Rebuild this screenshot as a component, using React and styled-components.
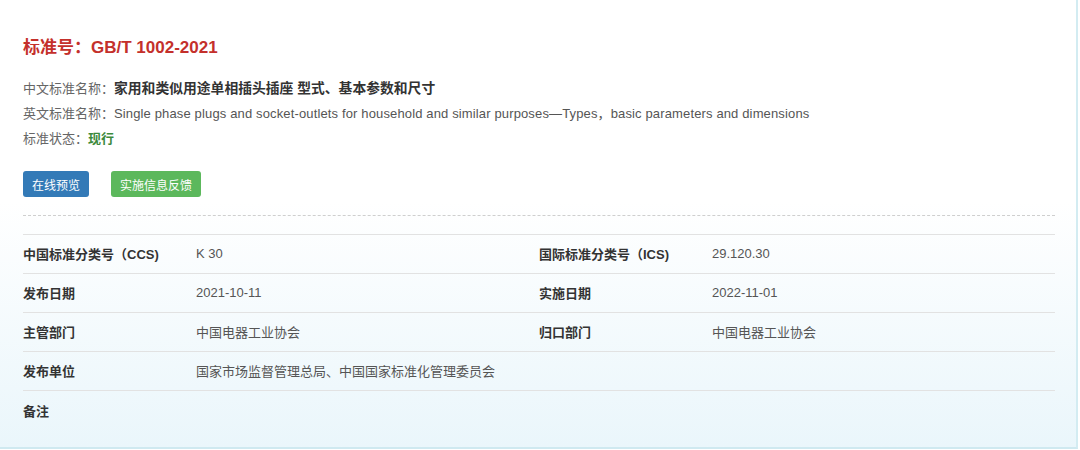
import styled, { createGlobalStyle } from "styled-components";

const GlobalStyle = createGlobalStyle`
  body {
    margin: 0;
    background: #fff;
    font-family: "Liberation Sans", Arial, "Noto Sans CJK SC", sans-serif;
  }
`;

const Panel = styled.div`
  box-sizing: border-box;
  width: 1078px;
  height: 449px;
  padding: 37px 21px 0 23px;
  background: linear-gradient(to bottom, #ffffff 45%, #eaf6fb 100%);
  border-right: 2px solid #d3ecf2;
  border-bottom: 2px solid #cfe9f0;
`;

const Title = styled.h1`
  margin: 0 0 17px;
  font-size: 17px;
  line-height: 22px;
  font-weight: bold;
  color: #c4302b;
`;

const InfoLine = styled.div`
  font-size: 13px;
  line-height: 25px;
  color: #666;
`;

const InfoValue = styled.span`
  color: ${(p) => p.color || "#333"};
  font-weight: ${(p) => (p.bold ? "bold" : "normal")};
  font-size: ${(p) => p.size || "13px"};
  letter-spacing: ${(p) => p.spacing || "0"};
`;

const Actions = styled.div`
  display: flex;
  gap: 22px;
  margin-top: 20px;
`;

const Button = styled.button`
  height: 26px;
  padding: 0 9px;
  border: none;
  border-radius: 3px;
  font-family: inherit;
  font-size: 12px;
  color: #fff;
  background: ${(p) => p.bg};
  cursor: pointer;
`;

const Divider = styled.hr`
  margin: 18px 0 18px;
  border: none;
  border-top: 1px dashed #cfcfcf;
`;

const Table = styled.div`
  display: grid;
  grid-template-columns: 173px 343px 173px 1fr;
  border-top: 1px solid #e2e2e2;
`;

const Cell = styled.div`
  box-sizing: border-box;
  height: 39px;
  padding-bottom: 1px;
  display: flex;
  align-items: center;
  font-size: 13px;
  border-bottom: ${(p) => (p.last ? "none" : "1px solid #e2e2e2")};
  color: ${(p) => (p.label ? "#333" : "#555")};
  font-weight: ${(p) => (p.label ? "bold" : "normal")};
  grid-column: ${(p) => p.span || "auto"};
`;

const rows = [
  ["中国标准分类号（CCS)", "K 30", "国际标准分类号（ICS)", "29.120.30"],
  ["发布日期", "2021-10-11", "实施日期", "2022-11-01"],
  ["主管部门", "中国电器工业协会", "归口部门", "中国电器工业协会"],
];

export default function App() {
  return (
    <>
      <GlobalStyle />
      <Panel>
        <Title>标准号：GB/T 1002-2021</Title>
        <InfoLine>
          中文标准名称：
          <InfoValue bold size="13.8px">家用和类似用途单相插头插座 型式、基本参数和尺寸</InfoValue>
        </InfoLine>
        <InfoLine>
          英文标准名称：
          <InfoValue color="#555" spacing="0.14px">
            Single phase plugs and socket-outlets for household and similar purposes—Types，basic parameters and dimensions
          </InfoValue>
        </InfoLine>
        <InfoLine>
          标准状态：<InfoValue bold color="#3c8a3c">现行</InfoValue>
        </InfoLine>
        <Actions>
          <Button bg="#337ab7">在线预览</Button>
          <Button bg="#5cb85c">实施信息反馈</Button>
        </Actions>
        <Divider />
        <Table>
          {rows.map((r) =>
            r.map((text, i) => (
              <Cell key={r[0] + i} label={i % 2 === 0}>
                {text}
              </Cell>
            ))
          )}
          <Cell label>发布单位</Cell>
          <Cell span="span 3">国家市场监督管理总局、中国国家标准化管理委员会</Cell>
          <Cell label last>备注</Cell>
          <Cell span="span 3" last />
        </Table>
      </Panel>
    </>
  );
}
